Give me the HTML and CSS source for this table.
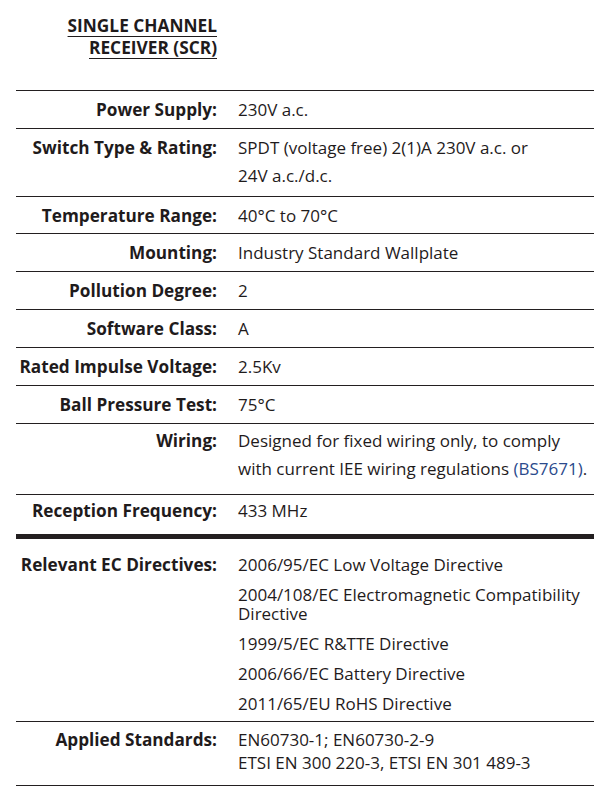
FILE: index.html
```html
<!DOCTYPE html>
<html lang="en">
<head>
<meta charset="utf-8">
<title>Single Channel Receiver (SCR)</title>
<link rel="stylesheet" href="styles.css">
</head>
<body>
<div class="sheet">
  <h1 class="title"><span>SINGLE CHANNEL</span><br><span>RECEIVER (SCR)</span></h1>

  <div class="specs">
    <div class="row">
      <div class="label">Power Supply:</div>
      <div class="value">230V a.c.</div>
    </div>
    <div class="row row-double">
      <div class="label">Switch Type &amp; Rating:</div>
      <div class="value">SPDT (voltage free) 2(1)A 230V a.c. or<br>24V a.c./d.c.</div>
    </div>
    <div class="row row-tight">
      <div class="label">Temperature Range:</div>
      <div class="value">40°C to 70°C</div>
    </div>
    <div class="row">
      <div class="label">Mounting:</div>
      <div class="value">Industry Standard Wallplate</div>
    </div>
    <div class="row">
      <div class="label">Pollution Degree:</div>
      <div class="value">2</div>
    </div>
    <div class="row">
      <div class="label">Software Class:</div>
      <div class="value">A</div>
    </div>
    <div class="row">
      <div class="label">Rated Impulse Voltage:</div>
      <div class="value">2.5Kv</div>
    </div>
    <div class="row">
      <div class="label">Ball Pressure Test:</div>
      <div class="value">75°C</div>
    </div>
    <div class="row row-wiring">
      <div class="label">Wiring:</div>
      <div class="value">Designed for fixed wiring only, to comply<br>with current IEE wiring regulations <span class="ref">(BS7671)</span>.</div>
    </div>
    <div class="row row-reception">
      <div class="label">Reception Frequency:</div>
      <div class="value">433 MHz</div>
    </div>
  </div>

  <div class="specs specs-compliance">
    <div class="row row-list">
      <div class="label">Relevant EC Directives:</div>
      <ul class="value list">
        <li>2006/95/EC Low Voltage Directive</li>
        <li>2004/108/EC Electromagnetic Compatibility<br>Directive</li>
        <li>1999/5/EC R&amp;TTE Directive</li>
        <li>2006/66/EC Battery Directive</li>
        <li>2011/65/EU RoHS Directive</li>
      </ul>
    </div>
    <div class="row row-standards">
      <div class="label">Applied Standards:</div>
      <div class="value">EN60730-1; EN60730-2-9<br>ETSI EN 300 220-3, ETSI EN 301 489-3</div>
    </div>
  </div>
</div>
</body>
</html>
```

FILE: styles.css
```css
html, body {
  margin: 0;
  padding: 0;
  background: #ffffff;
}

body {
  font-family: "Open Sans", "Noto Sans", "DejaVu Sans", sans-serif;
  color: #1f1b1c;
  font-size: 17px;
}

.sheet {
  margin-left: 16px;
}

.title {
  width: 201px;
  margin: 0;
  padding-top: 15px;
  margin-bottom: 31px;
  font-size: 17.3px;
  font-weight: 700;
  line-height: 22px;
  text-align: right;
}

.title span {
  text-decoration: underline;
  text-decoration-thickness: 1px;
  text-underline-offset: 4px;
}

.specs {
  display: flex;
  flex-direction: column;
}

.row {
  display: grid;
  grid-template-columns: 201px 1fr;
  column-gap: 21px;
  border-top: 1px solid #231f20;
  padding: 5px 0 4px;
  line-height: 28px;
}

.row-tight {
  padding-bottom: 3px;
}

.row-double {
  padding-bottom: 6px;
}

.row-wiring {
  padding-top: 3px;
  padding-bottom: 11px;
}

.row-reception {
  padding-top: 2px;
  padding-bottom: 9px;
}

.label {
  font-size: 17.2px;
  font-weight: 700;
  text-align: right;
  white-space: nowrap;
}

.value {
  white-space: nowrap;
}

.ref {
  color: #2b4a8c;
}

.specs-compliance .row-list {
  border-top: 5px solid #231f20;
  padding: 16px 0 8px;
  line-height: 19px;
}

.list {
  list-style: none;
  margin: 0;
  padding: 0;
  display: flex;
  flex-direction: column;
  gap: 11px;
}

.row-standards {
  padding: 6px 0 11px;
  line-height: 23px;
  border-bottom: 1px solid #231f20;
}
```
